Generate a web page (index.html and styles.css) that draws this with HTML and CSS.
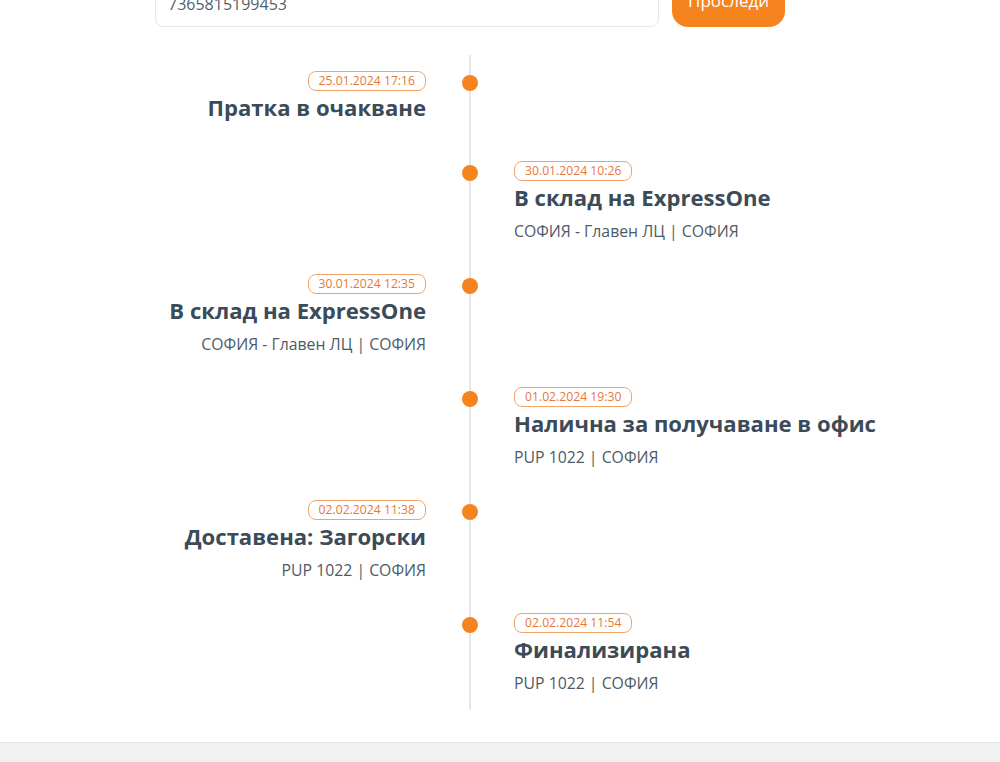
FILE: index.html
```html
<!DOCTYPE html>
<html lang="bg">
<head>
<meta charset="utf-8">
<title>Проследяване на пратка</title>
<link rel="stylesheet" href="styles.css">
</head>
<body>
<main class="page">
  <form class="search">
    <input class="search-input" type="text" value="7365815199453">
    <button class="search-btn" type="button">Проследи</button>
  </form>

  <section class="tl">
    <div class="tl-row tl-row--first tl-row--short">
      <div class="tl-cell tl-left">
        <span class="badge">25.01.2024 17:16</span>
        <div class="tl-title">Пратка в очакване</div>
      </div>
      <div class="tl-axis"><span class="dot"></span></div>
      <div class="tl-cell tl-right"></div>
    </div>

    <div class="tl-row">
      <div class="tl-cell tl-left"></div>
      <div class="tl-axis"><span class="dot"></span></div>
      <div class="tl-cell tl-right">
        <span class="badge">30.01.2024 10:26</span>
        <div class="tl-title">В склад на ExpressOne</div>
        <div class="tl-sub">СОФИЯ - Главен ЛЦ | СОФИЯ</div>
      </div>
    </div>

    <div class="tl-row">
      <div class="tl-cell tl-left">
        <span class="badge">30.01.2024 12:35</span>
        <div class="tl-title">В склад на ExpressOne</div>
        <div class="tl-sub">СОФИЯ - Главен ЛЦ | СОФИЯ</div>
      </div>
      <div class="tl-axis"><span class="dot"></span></div>
      <div class="tl-cell tl-right"></div>
    </div>

    <div class="tl-row">
      <div class="tl-cell tl-left"></div>
      <div class="tl-axis"><span class="dot"></span></div>
      <div class="tl-cell tl-right">
        <span class="badge">01.02.2024 19:30</span>
        <div class="tl-title">Налична за получаване в офис</div>
        <div class="tl-sub">PUP 1022 | СОФИЯ</div>
      </div>
    </div>

    <div class="tl-row">
      <div class="tl-cell tl-left">
        <span class="badge">02.02.2024 11:38</span>
        <div class="tl-title">Доставена: Загорски</div>
        <div class="tl-sub">PUP 1022 | СОФИЯ</div>
      </div>
      <div class="tl-axis"><span class="dot"></span></div>
      <div class="tl-cell tl-right"></div>
    </div>

    <div class="tl-row tl-row--last">
      <div class="tl-cell tl-left"></div>
      <div class="tl-axis"><span class="dot"></span></div>
      <div class="tl-cell tl-right">
        <span class="badge">02.02.2024 11:54</span>
        <div class="tl-title">Финализирана</div>
        <div class="tl-sub">PUP 1022 | СОФИЯ</div>
      </div>
    </div>
  </section>
</main>
<footer class="footer"></footer>
</body>
</html>
```

FILE: styles.css
```css
* { box-sizing: border-box; }

html, body {
  margin: 0;
  padding: 0;
  background: #ffffff;
  font-family: "Open Sans", "Noto Sans", "Liberation Sans", sans-serif;
  color: #3a4a57;
}

.page {
  width: 630px;
  margin-left: 155px;
  padding-bottom: 32px;
}

.search {
  display: flex;
  gap: 13px;
  margin: -20px 0 0 0;
  align-items: flex-start;
}

.search-input {
  width: 504px;
  height: 47px;
  border: 1px solid #e3e6ec;
  border-radius: 8px;
  padding: 0 12px;
  font-family: inherit;
  font-size: 16px;
  color: #555f68;
  background: #fff;
  outline: none;
}

.search-btn {
  width: 113px;
  height: 54px;
  margin-top: -7px;
  border: none;
  border-radius: 16px;
  background: #f5841f;
  color: #ffffff;
  font-family: inherit;
  font-size: 17px;
  cursor: pointer;
}

.tl {
  margin-top: 28px;
  background: linear-gradient(#e3e7ec, #e3e7ec) no-repeat 314px 0 / 2px 100%;
}

.tl-row {
  display: grid;
  grid-template-columns: 271px 88px 271px;
}

.tl-cell {
  padding-bottom: 32px;
  white-space: nowrap;
  line-height: 20px;
}

.tl-row--first .tl-cell { padding-top: 16px; }
.tl-row--first .dot { margin-top: 20px; }
.tl-row--short .tl-cell { padding-bottom: 39px; }
.tl-row--last .tl-cell { padding-bottom: 16px; }

.tl-left { text-align: right; }
.tl-right { text-align: left; }

.tl-axis {
  display: flex;
  justify-content: center;
  align-items: flex-start;
}

.dot {
  display: block;
  width: 16px;
  height: 16px;
  margin-top: 4px;
  border-radius: 50%;
  background: #f5841f;
}

.badge {
  display: inline-block;
  height: 20px;
  line-height: 18px;
  padding: 0 10px;
  border: 1px solid #f2a468;
  border-radius: 8px;
  font-size: 12.2px;
  color: #e9773a;
  vertical-align: top;
}

.tl-title {
  margin-top: 1px;
  font-size: 22.1px;
  line-height: 30px;
  font-weight: 700;
  color: #3b4b58;
}

.tl-sub {
  margin-top: 8px;
  font-size: 15.8px;
  line-height: 22px;
  color: #4d5b67;
}

.footer {
  height: 60px;
  background: #f1f1f1;
  border-top: 1px solid #e2e6ec;
}
```
